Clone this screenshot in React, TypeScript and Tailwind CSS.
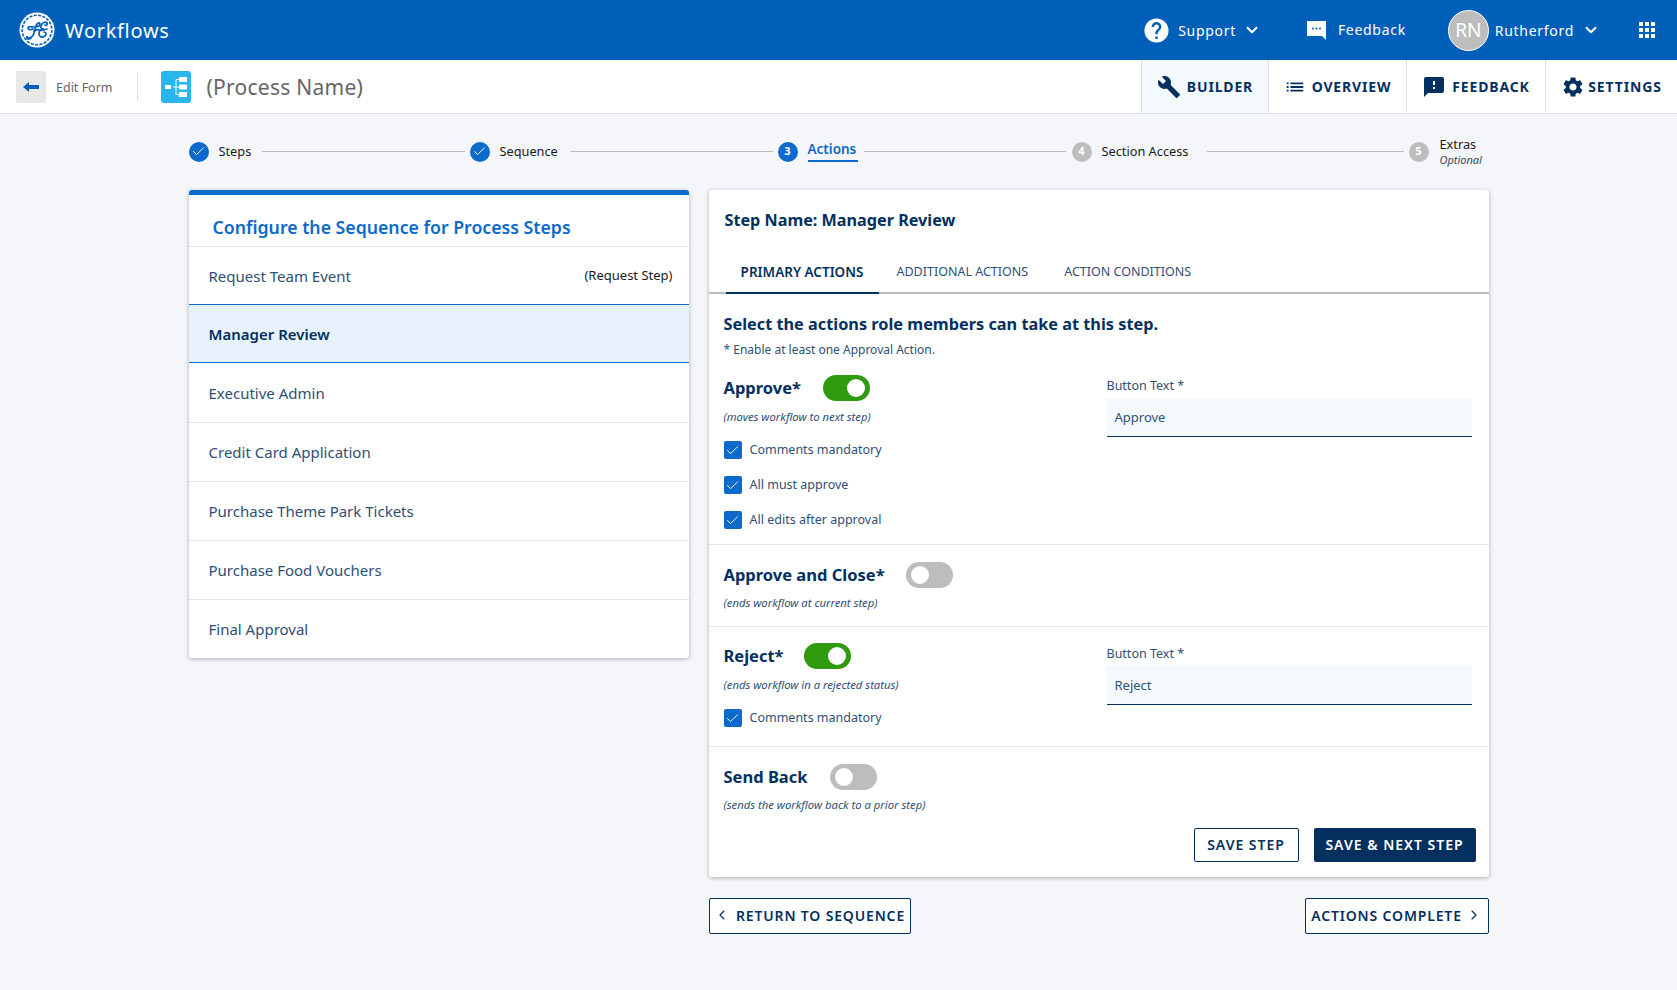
import { ChevronDown, ChevronLeft, ChevronRight, Check } from "lucide-react";
import { MdBuild, MdFeedback, MdHelp, MdList, MdSettings } from "react-icons/md";

const navy = "text-[#03305f]";

const GeLogo = () => (
  <svg width="36" height="36" viewBox="0 0 36 36" className="shrink-0">
    <circle cx="18" cy="18" r="17.5" fill="#fff" />
    <circle cx="18" cy="18" r="14.8" fill="none" stroke="#0060b9" strokeWidth="1.6" strokeDasharray="3 1.4" />
    <g fill="none" stroke="#0060b9" strokeWidth="1.7" strokeLinecap="round">
      <path d="M8 25c3 2 6 0 7-4l2-7c1-3 4-4 4-2s-3 3-6 3-6-1-6 1 3 2 5 1" />
      <path d="M15 19c2-1 4-2 5-1M8 25c-1 2 2 3 4 1" />
      <path d="M28 11c-2-2-5 0-6 3-1 2 1 3 3 3-3 0-5 2-5 5 0 3 3 4 6 2 2-2 1-4-1-4" />
      <path d="M28 11c1 2-1 3-2 2M20 18c2 1 5 0 8-1" />
    </g>
  </svg>
);

const StepDone = () => (
  <span className="flex h-5 w-5 shrink-0 items-center justify-center rounded-full bg-[#0b6acb]">
    <Check size={15} strokeWidth={1.5} className="text-white" />
  </span>
);

const StepNum = ({ n, active }: { n: number; active?: boolean }) => (
  <span
    className={`flex h-5 w-5 shrink-0 items-center justify-center rounded-full text-[11px] font-bold text-white ${
      active ? "bg-[#0b6acb]" : "bg-[#bdbdbd]"
    }`}
  >
    {n}
  </span>
);

const Line = ({ className }: { className: string }) => <div className={`h-px shrink-0 bg-[#b9bcc4] ${className}`} />;

const Toggle = ({ on }: { on?: boolean }) => (
  <span
    className={`flex h-[26px] w-[47px] items-center rounded-full px-[5px] ${
      on ? "justify-end bg-[#2f9a0c]" : "justify-start bg-[#bdbdbd]"
    }`}
  >
    <span className="h-[18px] w-[18px] rounded-full bg-white" />
  </span>
);

const CheckRow = ({ label }: { label: string }) => (
  <div className="flex h-[18px] items-center gap-2">
    <span className="flex h-[18px] w-[18px] items-center justify-center rounded-[2px] bg-[#0b6acb]">
      <Check size={15} strokeWidth={1.5} className="text-white" />
    </span>
    <span className="text-[12.5px] text-[#2f4f74]">{label}</span>
  </div>
);

const ButtonText = ({ value }: { value: string }) => (
  <div className="mr-[2px] mt-[1px] w-[365px]">
    <div className="h-[22px] text-[12.5px] leading-[19px] text-[#2f4f74]">Button Text *</div>
    <div className="flex h-[39px] items-center border-b border-[#03305f] bg-[#f4f9fe] px-2 pt-px text-[13px] text-[#2f4f74]">
      {value}
    </div>
  </div>
);

const ActionHead = ({ title, on, gap, low }: { title: string; on?: boolean; gap: string; low?: boolean }) => (
  <div className={`flex h-[26px] items-center ${gap}`}>
    <span className={`text-[16.5px] font-bold ${navy} ${low ? "pt-px" : ""}`}>{title}</span>
    <Toggle on={on} />
  </div>
);

const Hint = ({ children, tight }: { children: string; tight?: boolean }) => (
  <div className={`${tight ? "mt-[6px]" : "mt-[7px]"} h-[18px] text-[11.25px] italic leading-[18px] text-[#2f4f74]`}>{children}</div>
);

const steps = [
  "Request Team Event",
  "Manager Review",
  "Executive Admin",
  "Credit Card Application",
  "Purchase Theme Park Tickets",
  "Purchase Food Vouchers",
  "Final Approval",
];

const NavTab = ({
  icon,
  label,
  width,
  active,
}: {
  icon: React.ReactNode;
  label: string;
  width: string;
  active?: boolean;
}) => (
  <div
    className={`flex h-full items-center justify-center gap-[6px] border-l border-[#dcdfe4] ${width} ${
      active ? "bg-[#f4f9fe]" : "bg-white"
    }`}
  >
    {icon}
    <span className={`text-[14px] font-bold tracking-[0.06em] ${navy}`}>{label}</span>
  </div>
);

export default function App() {
  return (
    <div className="min-h-[990px] bg-[#f4f6fa] font-['Noto_Sans',sans-serif]">
      <header className="flex h-[60px] items-center bg-[#0060b9] text-white">
        <div className="ml-[19px]">
          <GeLogo />
        </div>
        <span className="ml-[10px] mt-[2px] text-[20px] tracking-[0.035em]">Workflows</span>
        <div className="ml-auto flex items-center text-[14px] tracking-[0.05em]">
          <MdHelp size={29} className="-mx-[3px]" />
          <span className="ml-[10px]">Support</span>
          <ChevronDown size={18} strokeWidth={2.5} className="ml-[7px]" />
          <svg width="21" height="21" viewBox="0 0 21 21" className="ml-[45px]">
            <path d="M1 1h19v19l-4-4H1z" fill="#fff" />
            <circle cx="7" cy="8.5" r="1" fill="#0060b9" />
            <circle cx="10.5" cy="8.5" r="1" fill="#0060b9" />
            <circle cx="14" cy="8.5" r="1" fill="#0060b9" />
          </svg>
          <span className="-mt-[2px] ml-[11px]">Feedback</span>
          <span className="ml-[42px] flex h-[41px] w-[41px] items-center justify-center rounded-full border border-white bg-[#bdbdbd] text-[19px] tracking-normal">
            RN
          </span>
          <span className="ml-[6px]">Rutherford</span>
          <ChevronDown size={18} strokeWidth={2.5} className="ml-[8px]" />
          <div className="ml-[39px] mr-[22px] grid grid-cols-3 gap-[2px]">
            {Array.from({ length: 9 }).map((_, i) => (
              <span key={i} className="h-[4px] w-[4px] bg-white" />
            ))}
          </div>
        </div>
      </header>

      <div className="flex h-[54px] items-center border-b border-[#dcdfe4] bg-white">
        <div className="ml-4 flex h-[32px] w-[30px] items-center justify-center rounded-[2px] bg-[#e8e8e8]">
          <svg width="18" height="12" viewBox="0 0 18 12">
            <path d="M7 1 1 6l6 5V8h10V4H7z" fill="#0060b9" />
          </svg>
        </div>
        <span className="ml-[10px] mt-[3px] text-[12.5px] text-[#666]">Edit Form</span>
        <div className="ml-[24px] h-[27px] w-px bg-[#dcdfe4]" />
        <div className="ml-[23px] flex h-[32px] w-[30px] items-center justify-center rounded-[3px] bg-[#29b6ee]">
          <svg width="26" height="26" viewBox="0 0 26 26">
            <rect x="2" y="11" width="6" height="4" fill="#fff" />
            <rect x="16" y="3" width="8" height="5" fill="#fff" />
            <rect x="16" y="10.5" width="8" height="5" fill="#fff" />
            <rect x="16" y="18" width="8" height="5" fill="#fff" />
            <path d="M16 5.5h-3v15h3M10 13h6" fill="none" stroke="#fff" strokeWidth="1" />
          </svg>
        </div>
        <span className="ml-[16px] mt-[2px] text-[21px] tracking-[0.012em] text-[#666]">(Process Name)</span>
        <div className="ml-auto flex h-full">
          <NavTab width="w-[127px]" active label="BUILDER" icon={<MdBuild size={24} className={navy} />} />
          <NavTab width="w-[138px]" label="OVERVIEW" icon={<MdList size={22} className={navy} />} />
          <NavTab width="w-[139px]" label="FEEDBACK" icon={<MdFeedback size={24} className={navy} />} />
          <NavTab width="w-[132px]" label="SETTINGS" icon={<MdSettings size={24} className={`${navy} -mr-[3px]`} />} />
        </div>
      </div>

      <div className="mx-auto w-[1300px]">
        <div className="flex h-[76px] w-[1294px] items-center pb-[1px] text-[12.75px] text-[#1a1a1a]">
          <StepDone />
          <span className="ml-[10px] w-[33px]">Steps</span>
          <Line className="ml-[10px] mr-[5px] w-[203px]" />
          <StepDone />
          <span className="ml-[10px] w-[57px]">Sequence</span>
          <Line className="ml-[13px] mr-[5px] w-[203px]" />
          <StepNum n={3} active />
          <span className="ml-[10px] w-[50px] border-b-2 border-[#0b6acb] pb-[2px] text-[13.5px] font-semibold leading-[17px] text-[#0b6acb]">
            Actions
          </span>
          <Line className="ml-[6px] mr-[6px] w-[202px]" />
          <StepNum n={4} />
          <span className="ml-[10px] w-[87px]">Section Access</span>
          <Line className="ml-[18px] mr-[5px] w-[197px]" />
          <StepNum n={5} />
          <div className="ml-[11px] flex flex-col leading-[15px]">
            <span>Extras</span>
            <span className="text-[11px] italic text-[#3a4a5a]">Optional</span>
          </div>
        </div>

        <div className="flex items-start gap-[20px]">
          <section className="w-[500px] overflow-hidden rounded-[3px] border-t-[5px] border-[#0b6acb] bg-white shadow-[0_1px_4px_rgba(0,0,0,0.3)]">
            <h2 className="flex h-[51px] items-end pb-[6px] pl-[24px] text-[17.7px] font-semibold leading-[26px] text-[#0b6acb]">
              Configure the Sequence for Process Steps
            </h2>
            {steps.map((s, i) => (
              <div
                key={s}
                className={`flex items-center justify-between pl-5 pr-4 text-[15px] ${
                  i === 1
                    ? "h-[59px] border-y border-[#0b6acb] bg-[#e8f2fc] pt-px font-semibold text-[#03305f]"
                    : i === 0
                      ? "h-[58px] border-t border-[#e3e5e8] pt-px text-[#2f4f74]"
                      : i === 2
                        ? "h-[59px] pt-px text-[#2f4f74]"
                        : "h-[59px] border-t border-[#e3e5e8] text-[#2f4f74]"
                }`}
              >
                <span>{s}</span>
                {i === 0 && <span className="text-[13px] text-[#1a1a1a]">(Request Step)</span>}
              </div>
            ))}
          </section>

          <section className="h-[687px] w-[780px] rounded-[3px] bg-white shadow-[0_1px_4px_rgba(0,0,0,0.3)]">
            <h2 className={`h-[58px] pl-[16px] pt-[18px] text-[16.2px] font-bold leading-[24px] ${navy}`}>Step Name: Manager Review</h2>
            <div className="flex h-[46px] items-stretch border-b-2 border-[#bdbdbd] pl-[17px] text-[12.5px] text-[#2f4f74]">
              <div className={`-mb-[2px] flex w-[153px] items-center justify-center border-b-2 border-[#03305f] pt-1 text-[13.5px] font-semibold ${navy}`}>
                PRIMARY ACTIONS
              </div>
              <div className="ml-[18px] flex items-center pt-1">ADDITIONAL ACTIONS</div>
              <div className="ml-9 flex items-center pt-1">ACTION CONDITIONS</div>
            </div>

            <div className="h-[251px] border-b border-[#e3e5e8] px-[15px] pt-[18px]">
              <div className={`text-[16.3px] font-bold leading-[24px] ${navy}`}>Select the actions role members can take at this step.</div>
              <div className="mt-[5px] h-[18px] text-[12px] leading-[18px] text-[#2f4f74]">* Enable at least one Approval Action.</div>
              <div className="mt-[16px] flex justify-between">
                <div>
                  <ActionHead title="Approve*" on low gap="gap-[22px]" />
                  <Hint>(moves workflow to next step)</Hint>
                  <div className="mt-[15px] flex flex-col gap-[17px]">
                    <CheckRow label="Comments mandatory" />
                    <CheckRow label="All must approve" />
                    <CheckRow label="All edits after approval" />
                  </div>
                </div>
                <ButtonText value="Approve" />
              </div>
            </div>

            <div className="h-[82px] border-b border-[#e3e5e8] px-[15px] pt-[17px]">
              <ActionHead title="Approve and Close*" gap="gap-[21px]" />
              <Hint tight>(ends workflow at current step)</Hint>
            </div>

            <div className="flex h-[120px] justify-between border-b border-[#e3e5e8] px-[15px] pt-[16px]">
              <div>
                <ActionHead title="Reject*" on low gap="gap-[20px]" />
                <Hint>(ends workflow in a rejected status)</Hint>
                <div className="mt-[15px]">
                  <CheckRow label="Comments mandatory" />
                </div>
              </div>
              <ButtonText value="Reject" />
            </div>

            <div className="px-[15px] pt-[17px]">
              <ActionHead title="Send Back" gap="gap-[22px]" />
              <Hint tight>(sends the workflow back to a prior step)</Hint>
              <div className="mt-[14px] flex justify-end gap-[15px] text-[14px] font-semibold tracking-[0.07em]">
                <button className={`h-[34px] w-[105px] rounded-[2px] border border-[#03305f] bg-white pb-px ${navy}`}>SAVE STEP</button>
                <button className="-mr-[2px] h-[34px] w-[162px] rounded-[2px] bg-[#03305f] pb-px text-white">SAVE &amp; NEXT STEP</button>
              </div>
            </div>
          </section>
        </div>

        <div className="ml-[520px] mt-[21px] flex w-[780px] justify-between text-[14px] font-semibold tracking-[0.06em]">
          <button className={`flex h-[36px] w-[202px] items-center justify-center gap-[6px] rounded-[2px] border border-[#03305f] bg-white pb-[2px] ${navy}`}>
            <ChevronLeft size={16} strokeWidth={1.75} />
            RETURN TO SEQUENCE
          </button>
          <button className={`flex h-[36px] w-[184px] items-center justify-center gap-[4px] rounded-[2px] border border-[#03305f] bg-white pb-[2px] ${navy}`}>
            ACTIONS COMPLETE
            <ChevronRight size={16} strokeWidth={1.75} />
          </button>
        </div>
      </div>
    </div>
  );
}
